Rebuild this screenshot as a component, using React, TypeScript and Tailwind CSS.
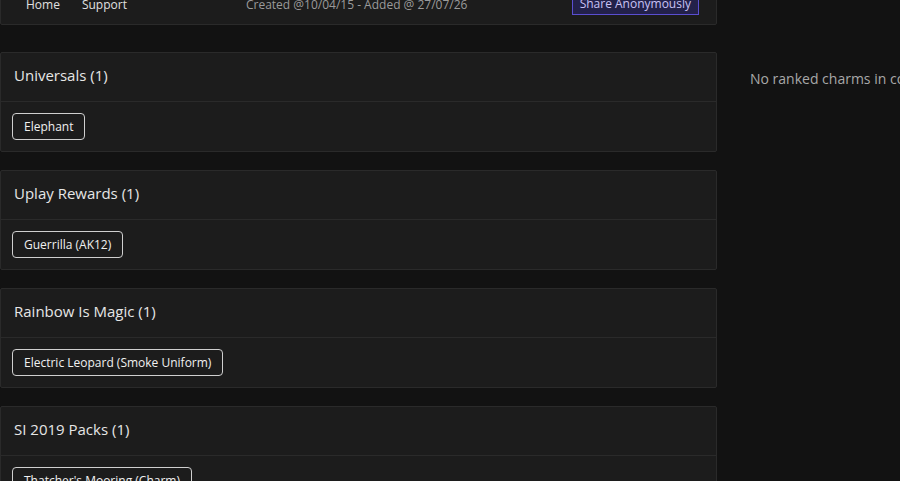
import React from "react";

const sections = [
  { title: "Universals (1)", items: ["Elephant"] },
  { title: "Uplay Rewards (1)", items: ["Guerrilla (AK12)"] },
  { title: "Rainbow Is Magic (1)", items: ["Electric Leopard (Smoke Uniform)"] },
  { title: "SI 2019 Packs (1)", items: ["Thatcher's Mooring (Charm)"] },
];

function Section({ title, items }: { title: string; items: string[] }) {
  return (
    <div className="rounded-[2px] border border-[#2a2a2a] bg-[#1c1c1c]">
      <div className="flex h-[49px] items-center border-b border-[#2a2a2a] px-[13px] pb-[3px] text-[15px] text-[#e6e6e6]">
        {title}
      </div>
      <div className="flex h-[49px] items-center gap-2 px-[11px]">
        {items.map((it) => (
          <span
            key={it}
            className="flex h-[27px] items-center rounded-[4px] border border-[#cfcfcf] px-[11px] text-[12px] text-[#f0f0f0]"
          >
            {it}
          </span>
        ))}
      </div>
    </div>
  );
}

export default function App() {
  return (
    <div
      className="h-[481px] w-[900px] overflow-hidden bg-[#121212]"
      style={{ fontFamily: '"Open Sans", "Noto Sans", sans-serif' }}
    >
      <div className="flex">
        <div className="flex w-[717px] shrink-0 flex-col">
          <header className="mt-[-15px] flex h-[40px] items-center rounded-[2px] border border-[#2a2a2a] bg-[#1c1c1c] pl-[25px] pr-[17px] text-[12px]">
            <nav className="flex gap-[22px] text-[#e0e0e0]">
              <span>Home</span>
              <span>Support</span>
            </nav>
            <span className="ml-[119px] text-[#9a9a9a]">Created @10/04/15 - Added @ 27/07/26</span>
            <button className="ml-auto mt-[-2px] h-[22px] border border-[#5a4ed0] bg-[#23214a] px-[7px] text-[12px] text-[#c9c3f5]">
              Share Anonymously
            </button>
          </header>
          <div className="mt-[27px] flex flex-col gap-[18px]">
            {sections.map((s) => (
              <Section key={s.title} {...s} />
            ))}
          </div>
        </div>
        <div className="min-w-0 flex-1 overflow-hidden pl-[33px] pt-[68px]">
          <p className="whitespace-nowrap text-[14px] text-[#a8a8a8]">No ranked charms in collection</p>
        </div>
      </div>
    </div>
  );
}
